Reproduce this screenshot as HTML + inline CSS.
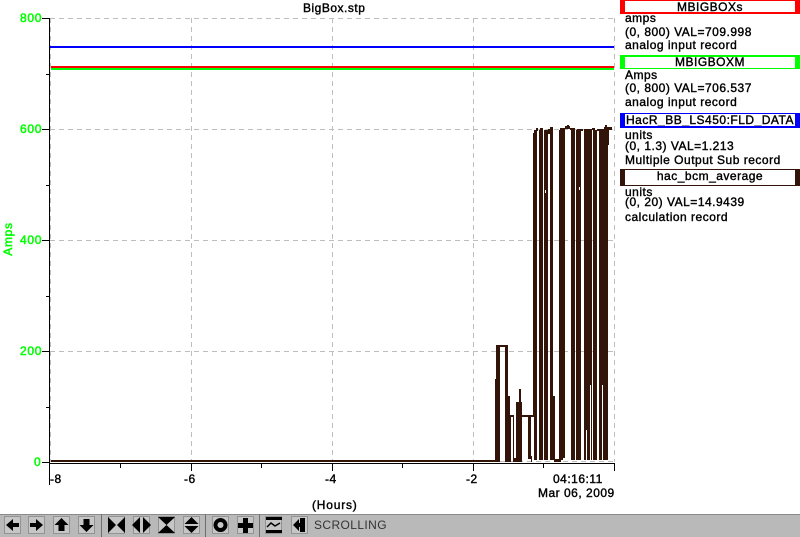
<!DOCTYPE html>
<html><head><meta charset="utf-8"><style>
html,body{margin:0;padding:0;background:#fff}
#r{position:relative;width:800px;height:537px;overflow:hidden;background:#fff;font-family:"Liberation Sans",sans-serif;font-size:12px;color:#000}
svg{position:absolute;left:0;top:0}
.t{position:absolute;white-space:pre;line-height:14px;letter-spacing:.5px;-webkit-text-stroke:.4px #000}
.g{color:#0f0;-webkit-text-stroke:.5px #0f0;letter-spacing:.7px}
.b{position:absolute;left:620px;width:180px;box-sizing:border-box;background:#fff;text-align:center;font-size:12px;letter-spacing:.5px;-webkit-text-stroke:.4px #000;white-space:pre;overflow:hidden;border-style:solid;border-left-width:5px;border-right-width:5px}
</style></head><body><div id="r">
<svg width="800" height="537" shape-rendering="crispEdges">
<g stroke="#bdbdbd" stroke-width="1" stroke-dasharray="5 4" fill="none">
<path d="M50 18.5H614M50 129.5H614M50 240.5H614M50 351.5H614M50 461.5H614"/>
<path d="M50.5 18V462M191.5 18V462M332.5 18V462M473.5 18V462M614.5 18V462"/>
</g>
<rect x="50" y="46" width="564" height="2" fill="#0000ff"/>
<rect x="51" y="66" width="563" height="2" fill="#ff0000"/>
<rect x="51" y="68" width="563" height="2" fill="#00ff00"/>
<g fill="#000">
<rect x="49" y="18" width="1" height="467"/>
<rect x="50" y="463" width="565" height="1"/>
<rect x="42" y="18" width="8" height="1"/><rect x="46" y="74" width="4" height="1"/>
<rect x="42" y="129" width="8" height="1"/><rect x="46" y="185" width="4" height="1"/>
<rect x="42" y="240" width="8" height="1"/><rect x="46" y="296" width="4" height="1"/>
<rect x="42" y="351" width="8" height="1"/><rect x="46" y="407" width="4" height="1"/>
<rect x="42" y="462" width="8" height="1"/>
<rect x="120" y="464" width="1" height="4"/><rect x="191" y="464" width="1" height="7"/>
<rect x="261" y="464" width="1" height="4"/><rect x="332" y="464" width="1" height="7"/>
<rect x="402" y="464" width="1" height="4"/><rect x="473" y="464" width="1" height="7"/>
<rect x="543" y="464" width="1" height="4"/><rect x="614" y="464" width="1" height="7"/>
</g>
<g fill="#321508">
<rect x="51" y="460" width="445" height="2"/>
<rect x="495" y="379" width="2" height="83"/><rect x="496" y="346" width="4" height="116"/>
<rect x="496" y="345" width="12" height="2"/><rect x="505" y="346" width="3" height="116"/>
<rect x="507" y="396" width="3" height="66"/>
<rect x="510" y="415" width="1" height="47"/><rect x="510" y="415" width="4" height="2"/>
<rect x="513" y="415" width="1" height="47"/><rect x="514" y="458" width="3" height="4"/>
<rect x="516" y="402" width="6" height="60"/><rect x="519" y="389" width="2" height="73"/>
<rect x="522" y="415" width="13" height="2"/><rect x="528" y="415" width="3" height="44"/>
<rect x="531" y="456" width="1" height="6"/>
<rect x="533" y="133" width="3" height="284"/><rect x="534" y="130" width="3" height="330"/><rect x="536" y="128" width="2" height="3"/>
<rect x="539" y="130" width="3" height="330"/><rect x="540" y="128" width="3" height="332"/>
<rect x="544" y="130" width="4" height="330"/><rect x="548" y="129" width="2" height="5"/>
<rect x="550" y="127" width="3" height="333"/><rect x="553" y="396" width="2" height="64"/>
<rect x="554" y="459" width="5" height="3"/>
<rect x="559" y="212" width="2" height="250"/><rect x="559" y="130" width="4" height="330"/><rect x="560" y="128" width="5" height="2"/>
<rect x="563" y="130" width="2" height="328"/><rect x="565" y="126" width="5" height="3"/><rect x="567" y="125" width="2" height="3"/>
<rect x="571" y="130" width="4" height="330"/><rect x="570" y="128" width="5" height="2"/>
<rect x="576" y="130" width="5" height="330"/><rect x="577" y="129" width="6" height="2"/>
<rect x="584" y="129" width="8" height="331"/><rect x="592" y="128" width="3" height="2"/>
<rect x="593" y="130" width="4" height="330"/>
<rect x="599" y="130" width="9" height="330"/><rect x="597" y="129" width="8" height="2"/>
<rect x="604" y="127" width="8" height="3"/><rect x="605" y="125" width="2" height="3"/>
<rect x="608" y="130" width="1" height="15"/>
</g>
<g fill="#fff">
<rect x="545" y="190" width="1" height="3"/><rect x="579" y="187" width="1" height="3"/>
<rect x="590" y="385" width="1" height="75"/><rect x="586" y="430" width="1" height="30"/>
<rect x="602" y="385" width="1" height="75"/><rect x="582" y="440" width="1" height="20"/>
</g>
<!-- toolbar -->
<rect x="0" y="514" width="800" height="23" fill="#b9b9b9"/>
<rect x="0" y="514" width="800" height="1" fill="#8a8a8a"/>
<g fill="#c6c6c6" stroke="#939393" stroke-width="1">
<rect x="4.500" y="516.500" width="16" height="17"/><rect x="28.500" y="516.500" width="16" height="17"/>
<rect x="53.500" y="516.500" width="16" height="17"/><rect x="78.500" y="516.500" width="16" height="17"/>
<rect x="108.500" y="516.500" width="16" height="17"/><rect x="133.500" y="516.500" width="16" height="17"/>
<rect x="158.500" y="516.500" width="16" height="17"/><rect x="183.500" y="516.500" width="16" height="17"/>
<rect x="212.500" y="516.500" width="16" height="17"/><rect x="237.500" y="516.500" width="16" height="17"/>
<rect x="265.500" y="516.500" width="16" height="17"/><rect x="291.500" y="516.500" width="16" height="17"/>
</g>
<rect x="101" y="514" width="1" height="23" fill="#6f6f6f"/>
<rect x="205" y="514" width="1" height="23" fill="#6f6f6f"/>
<rect x="259" y="514" width="1" height="23" fill="#6f6f6f"/>
<g fill="#000" shape-rendering="auto">
<path d="M6 525l7-6v4h6v4h-6v4z"/>
<path d="M43 525l-7-6v4h-6v4h6v4z"/>
<path d="M61.500 518l7 7h-4v6h-6v-6h-4z"/>
<path d="M86.500 532l7-7h-4v-6h-6v6h-4z"/>
<path d="M108 517l8 8-8 8zM125 517l-8 8 8 8z"/>
<path d="M140 517l-8 8 8 8zM143 517l8 8-8 8z"/>
<path d="M158 517h17l-8.500 8zM158 533h17l-8.500-8z"/>
<path d="M191.500 517l7 7h-14zM191.500 533l7-7h-14z"/>
<path fill-rule="evenodd" d="M220.500 518a7 7 0 1 0 .01 0zM220.500 522a3 3 0 1 1-.01 0z"/>
<path d="M243 518h5v5h5v5h-5v5h-5v-5h-5v-5h5z"/>
<path d="M266 517h16v3h-16zM266 530h16v3h-16z"/>
<path d="M293 525l6-6v4h1v-5h5v14h-5v-5h-1v4z"/>
</g>
<path d="M267 527l4-4 4 3 5-3" fill="none" stroke="#000" stroke-width="1.500" shape-rendering="auto"/>
</svg>
<div class="t" style="left:303px;top:1px">BigBox.stp</div>
<div class="t g" style="left:20px;top:11px">800</div>
<div class="t g" style="left:20px;top:122px">600</div>
<div class="t g" style="left:20px;top:233px">400</div>
<div class="t g" style="left:20px;top:344px">200</div>
<div class="t g" style="left:34px;top:455px">0</div>
<div class="t g" style="left:-9px;top:232px;transform:rotate(-90deg);width:34px;text-align:center">Amps</div>
<div class="t" style="left:50px;top:472px">-8</div>
<div class="t" style="left:184px;top:472px">-6</div>
<div class="t" style="left:325px;top:472px">-4</div>
<div class="t" style="left:466px;top:472px">-2</div>
<div class="t" style="left:553px;top:472px">04:16:11</div>
<div class="t" style="left:538px;top:486px">Mar 06, 2009</div>
<div class="t" style="left:312px;top:498px;letter-spacing:.8px">(Hours)</div>
<div class="b" style="top:0;height:14px;line-height:12px;border-color:#f00;border-top-width:1px;border-bottom-width:2px">MBIGBOXs</div>
<div class="t" style="left:625px;top:11px">amps</div>
<div class="t" style="left:625px;top:25px">(0, 800) VAL=709.998</div>
<div class="t" style="left:625px;top:38px">analog input record</div>
<div class="b" style="top:55px;height:14px;line-height:11px;border-color:#0f0;border-top-width:2px;border-bottom-width:1px">MBIGBOXM</div>
<div class="t" style="left:625px;top:68px">Amps</div>
<div class="t" style="left:625px;top:81px">(0, 800) VAL=706.537</div>
<div class="t" style="left:625px;top:95px">analog input record</div>
<div class="b" style="top:113px;height:15px;line-height:12px;border-color:#00f;border-top-width:1px;border-bottom-width:2px">HacR_BB_LS450:FLD_DATA</div>
<div class="t" style="left:625px;top:128px">units</div>
<div class="t" style="left:625px;top:139px">(0, 1.3) VAL=1.213</div>
<div class="t" style="left:625px;top:153px">Multiple Output Sub record</div>
<div class="b" style="top:169px;height:17px;line-height:13px;border-color:#321508;border-top-width:1px;border-bottom-width:1px">hac_bcm_average</div>
<div class="t" style="left:625px;top:185px">units</div>
<div class="t" style="left:625px;top:195px">(0, 20) VAL=14.9439</div>
<div class="t" style="left:625px;top:210px">calculation record</div>
<div class="t" style="left:314px;top:518px;color:#333;-webkit-text-stroke:0;letter-spacing:.4px">SCROLLING</div>
</div></body></html>
